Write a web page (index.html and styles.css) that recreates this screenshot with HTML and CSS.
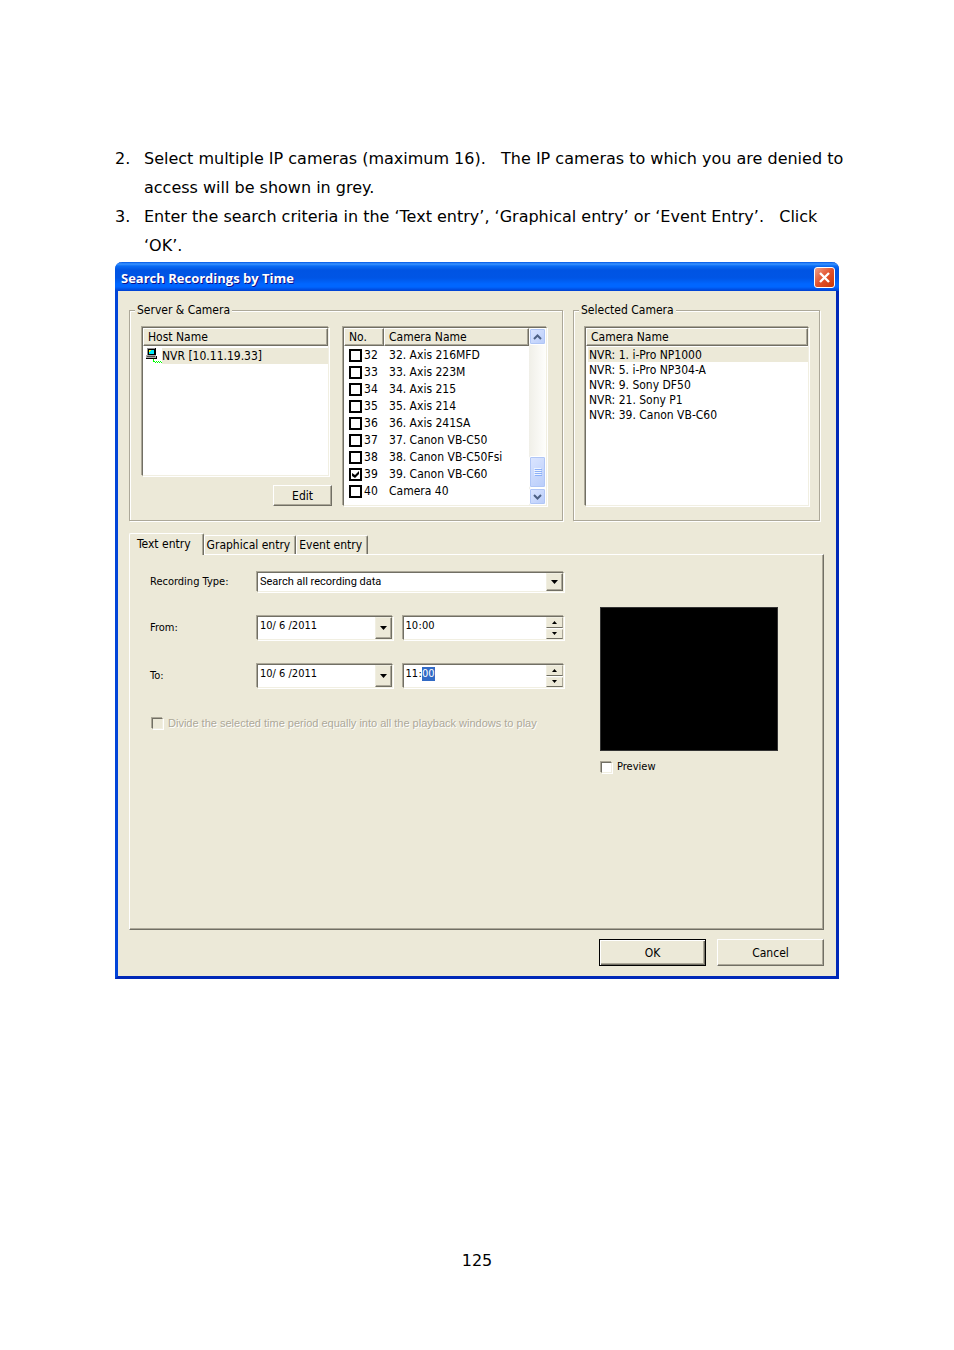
FILE: index.html
```html
<!DOCTYPE html>
<html lang="en">
<head>
<meta charset="utf-8">
<title>Search Recordings by Time</title>
<link rel="stylesheet" href="styles.css">
</head>
<body>
<main class="page">
  <ol class="steps" start="2">
    <li><span class="num">2.</span><p>Select multiple IP cameras (maximum 16).&nbsp;&nbsp; The IP cameras to which you are denied to access will be shown in grey.</p></li>
    <li><span class="num">3.</span><p>Enter the search criteria in the ‘Text entry’, ‘Graphical entry’ or ‘Event Entry’.&nbsp;&nbsp; Click ‘OK’.</p></li>
  </ol>

  <section class="dialog" aria-labelledby="dialog-title">
    <header class="titlebar">
      <h1 id="dialog-title">Search Recordings by Time</h1>
      <button class="close" type="button" aria-label="Close">
        <svg viewBox="0 0 19 19" width="19" height="19"><path d="M5 5l9 9M14 5l-9 9" stroke="#fff" stroke-width="2.4"/></svg>
      </button>
    </header>
    <form class="body">
      <div class="groups">
        <fieldset class="group group-server">
          <legend>Server &amp; Camera</legend>
          <div class="group-row">
            <div class="hosts">
              <div class="list host-list">
                <div class="head"><span class="head-cell">Host Name</span></div>
                <div class="host">
                  <svg viewBox="0 0 16 16" width="16" height="16" shape-rendering="crispEdges">
                    <path d="M1 0h9v8H1z" fill="#000"/>
                    <path d="M1 0h8v1H2v6H1z" fill="#909090"/>
                    <path d="M3 2h5v4H3z" fill="#00e8f8"/>
                    <path d="M3 2h2v1H4v1H3z" fill="#ffff00"/>
                    <path d="M0 8h11v3H0z" fill="#000"/>
                    <path d="M0 7h10v3H0z" fill="#a8a8a8"/>
                    <path d="M1 8h8v1H1z" fill="#505050"/>
                    <path d="M7 11h1v3H7zM7 13h2v1H7zM9 14h1v1H9zM10 13h1v1h-1zM11 14h1v1h-1zM12 13h1v1h-1zM13 14h1v1h-1zM14 13h1v1h-1zM15 14h1v1h-1z" fill="#00ff00"/>
                  </svg>
                  <span class="host-name">NVR [10.11.19.33]</span>
                </div>
              </div>
              <button class="btn btn-edit" type="button">Edit</button>
            </div>
            <div class="list camera-list">
              <table class="cameras">
                <thead><tr><th class="head-cell col-no">No.</th><th class="head-cell">Camera Name</th></tr></thead>
                <tbody>
                  <tr><td><label><input type="checkbox">32</label></td><td>32. Axis 216MFD</td></tr>
                  <tr><td><label><input type="checkbox">33</label></td><td>33. Axis 223M</td></tr>
                  <tr><td><label><input type="checkbox">34</label></td><td>34. Axis 215</td></tr>
                  <tr><td><label><input type="checkbox">35</label></td><td>35. Axis 214</td></tr>
                  <tr><td><label><input type="checkbox">36</label></td><td>36. Axis 241SA</td></tr>
                  <tr><td><label><input type="checkbox">37</label></td><td>37. Canon VB-C50</td></tr>
                  <tr><td><label><input type="checkbox">38</label></td><td>38. Canon VB-C50Fsi</td></tr>
                  <tr><td><label><input type="checkbox" checked>39</label></td><td>39. Canon VB-C60</td></tr>
                  <tr><td><label><input type="checkbox">40</label></td><td>Camera 40</td></tr>
                </tbody>
              </table>
              <div class="scrollbar">
                <button class="scroll-btn" type="button" aria-label="Scroll up"><svg viewBox="0 0 9 6" width="9" height="6"><path d="M1 5l3.500-3.500L8 5" fill="none" stroke="#4d6185" stroke-width="2"/></svg></button>
                <div class="track"><div class="thumb"><svg viewBox="0 0 8 8" width="8" height="8" shape-rendering="crispEdges"><path d="M0 0h7v1H0zM0 2h7v1H0zM0 4h7v1H0zM0 6h7v1H0z" fill="#eef4fe"/><path d="M1 1h7v1H1zM1 3h7v1H1zM1 5h7v1H1zM1 7h7v1H1z" fill="#8cb0f8"/></svg></div></div>
                <button class="scroll-btn" type="button" aria-label="Scroll down"><svg viewBox="0 0 9 6" width="9" height="6"><path d="M1 1l3.500 3.500L8 1" fill="none" stroke="#4d6185" stroke-width="2"/></svg></button>
              </div>
            </div>
          </div>
        </fieldset>
        <fieldset class="group group-selected">
          <legend>Selected Camera</legend>
          <div class="group-row">
            <div class="list selected-list">
              <div class="head"><span class="head-cell">Camera Name</span></div>
              <ul>
                <li class="current">NVR: 1. i-Pro NP1000</li>
                <li>NVR: 5. i-Pro NP304-A</li>
                <li>NVR: 9. Sony DF50</li>
                <li>NVR: 21. Sony P1</li>
                <li>NVR: 39. Canon VB-C60</li>
              </ul>
            </div>
          </div>
        </fieldset>
      </div>

      <div class="tabs" role="tablist">
        <button class="tab tab-active" type="button" role="tab" aria-selected="true">Text entry</button>
        <button class="tab" type="button" role="tab">Graphical entry</button>
        <button class="tab" type="button" role="tab">Event entry</button>
      </div>
      <div class="panel" role="tabpanel">
        <div class="fields">
          <label for="type">Recording Type:</label>
          <div class="field combo">
            <select id="type"><option>Search all recording data</option></select>
            <span class="drop"><svg viewBox="0 0 7 4" width="7" height="4"><path d="M0 0h7L3.500 4z"/></svg></span>
          </div>
          <label for="from-date">From:</label>
          <div class="pair">
            <div class="field date"><input id="from-date" type="text" value="10/ 6 /2011"><button class="drop" type="button" aria-label="Open calendar"><svg viewBox="0 0 7 4" width="7" height="4"><path d="M0 0h7L3.500 4z"/></svg></button></div>
            <div class="field time">
              <input class="seg" type="text" value="10" aria-label="From hour">:<input class="seg" type="text" value="00" aria-label="From minute">
              <div class="spin"><button type="button" aria-label="Later"><svg viewBox="0 0 5 3" width="5" height="3"><path d="M0 3h5L2.500 0z"/></svg></button><button type="button" aria-label="Earlier"><svg viewBox="0 0 5 3" width="5" height="3"><path d="M0 0h5L2.500 3z"/></svg></button></div>
            </div>
          </div>
          <label for="to-date">To:</label>
          <div class="pair">
            <div class="field date"><input id="to-date" type="text" value="10/ 6 /2011"><button class="drop" type="button" aria-label="Open calendar"><svg viewBox="0 0 7 4" width="7" height="4"><path d="M0 0h7L3.500 4z"/></svg></button></div>
            <div class="field time">
              <input class="seg" type="text" value="11" aria-label="To hour">:<input class="seg seg-active" type="text" value="00" aria-label="To minute">
              <div class="spin"><button type="button" aria-label="Later"><svg viewBox="0 0 5 3" width="5" height="3"><path d="M0 3h5L2.500 0z"/></svg></button><button type="button" aria-label="Earlier"><svg viewBox="0 0 5 3" width="5" height="3"><path d="M0 0h5L2.500 3z"/></svg></button></div>
            </div>
          </div>
          <label class="check check-off"><input type="checkbox" disabled>Divide the selected time period equally into all the playback windows to play</label>
        </div>
        <div class="preview">
          <div class="screen"></div>
          <label class="check"><input type="checkbox">Preview</label>
        </div>
      </div>
      <div class="actions">
        <button class="btn btn-default" type="button">OK</button>
        <button class="btn" type="button">Cancel</button>
      </div>
    </form>
  </section>
  <footer class="page-number">125</footer>
</main>
</body>
</html>
```
FILE: styles.css
```css
* { box-sizing: border-box; }
body { margin: 0; background: #fff; color: #000; font-family: "DejaVu Sans", Verdana, sans-serif; }
.page { padding: 144px 115px 80px; }

.steps { margin: 0 -10px 2px 0; padding: 0; list-style: none; font-size: 16px; line-height: 29px; }
.steps li { display: flex; }
.steps p { margin: 0; }
.num { flex: 0 0 29px; }

.dialog {
  --face: #ece9d8; --shade: #aca899; --dark: #716f64; --light: #f1efe2;
  border: 3px solid; border-top: 0; border-color: #0144d8 #0028b8 #0028b8 #0144d8;
  border-radius: 7px 7px 0 0; background: var(--face);
  font-family: "DejaVu Sans Condensed", Tahoma, sans-serif; font-size: 12px; line-height: 16px;
}
.dialog button, .dialog input, .dialog select { margin: 0; padding: 0; border: 0; font: inherit; color: inherit; background: none; border-radius: 0; }
.titlebar {
  display: flex; align-items: center; justify-content: space-between; height: 29px; margin: 0 -3px; padding: 2px 4px 0 6px;
  border-radius: 7px 7px 0 0;
  background: linear-gradient(#0058e6 0, #3a93ff 2px, #0a6cf5 4px, #0054e3 8px, #0055e5 16px, #0066ff 22px, #0066ff 25px, #0040d0 29px);
}
.titlebar h1 { margin: 0; color: #fff; font: 700 13px/20px "Open Sans", sans-serif; text-shadow: 1px 1px #0f1089; }
.dialog .close { display: grid; place-items: center; width: 21px; height: 21px; border: 1px solid #fff; border-radius: 3px; background: linear-gradient(135deg, #f0a088, #e2512c 50%, #c83808); }

.body { padding: 11px 12px 10px 11px; }
.groups { display: grid; grid-template-columns: 434fr 247fr; gap: 10px; margin-right: 4px; }
.group { min-width: 0; height: 219px; margin: 0; border: 1px solid var(--shade); box-shadow: 1px 1px #fff, inset 1px 1px #fff; }
.group-server { padding: 0 15px 0 12px; }
.group-selected { padding: 0 10px 0 11px; }
.group legend { margin-left: -7px; padding: 0 2px; background: var(--face); }
.group-selected legend { margin-left: -6px; }
.group-row { display: flex; gap: 11px; height: 179px; margin-top: 9px; }
.hosts { flex: 191 1 0; display: flex; flex-direction: column; gap: 9px; }

.list, .field {
  background: #fff; border: 1px solid; border-color: var(--dark) var(--light) var(--light) var(--dark);
  box-shadow: -1px -1px var(--shade), 1px 1px #fff;
}
.list { min-width: 0; }
.host-list { flex: 1; margin-right: 3px; }
.camera-list { flex: 203 1 0; display: flex; }
.selected-list { flex: 1; }
.head { display: flex; }
.head-cell {
  flex: 1; height: 18px; padding: 1px 4px 0; text-align: left; font-weight: 400; line-height: 15px; background: var(--face);
  border: 1px solid; border-color: #fff var(--dark) var(--dark) #fff; box-shadow: inset -1px -1px var(--shade);
}
.host { display: flex; margin-top: 2px; }
.host svg { margin-left: 3px; }
.host-name { flex: 1; background: var(--face); }

.cameras { flex: 1; align-self: flex-start; border-collapse: separate; border-spacing: 0; white-space: nowrap; }
.col-no { width: 40px; }
.cameras tbody::before { content: ""; display: block; height: 1px; }
.cameras td { height: 17px; padding: 0 0 0 5px; line-height: 17px; }
.cameras label { display: flex; align-items: center; gap: 2px; }
.dialog .cameras input { appearance: none; display: grid; place-items: center; width: 13px; height: 13px; border: 2px solid #000; background: #fff; }
.dialog .cameras input:checked::before { content: ""; width: 7px; height: 7px; background: #000; clip-path: polygon(0 29%, 43% 57%, 100% 0, 100% 43%, 43% 100%, 0 71%); }

.scrollbar { display: flex; flex-direction: column; width: 17px; background: linear-gradient(90deg, #f0efe8, #fefefc); }
.dialog .scroll-btn, .thumb { display: grid; place-items: center; border: 1px solid #fff; border-radius: 2px; background: linear-gradient(135deg, #dce6ff, #b8ccfa); box-shadow: inset 0 0 0 1px #b0c6f6; }
.dialog .scroll-btn { height: 17px; }
.track { flex: 1; display: flex; flex-direction: column; justify-content: flex-end; }
.thumb { height: 32px; }

.selected-list ul { margin: 1px 0 0; padding: 0 0 0 2px; list-style: none; }
.selected-list li { height: 15px; padding-left: 1px; line-height: 16px; white-space: nowrap; }
.selected-list .current { background: var(--face); }

.dialog .btn { border: 1px solid; border-color: #fff var(--dark) var(--dark) #fff; box-shadow: inset -1px -1px var(--shade); background: var(--face); }
.dialog .btn-edit { align-self: flex-end; width: 59px; height: 21px; }

.tabs { display: flex; align-items: flex-end; height: 22px; margin: 11px 0 0; }
.dialog .tab { height: 19px; padding: 0 5px 0 2px; border: 1px solid; border-color: #fff var(--dark) transparent #fff; border-bottom: 0; border-radius: 2px 2px 0 0; box-shadow: inset -1px 0 var(--shade); white-space: nowrap; }
.dialog .tab-active { position: relative; height: 22px; margin-bottom: -1px; padding: 0 12px 2px 7px; background: var(--face); }
.panel {
  display: flex; gap: 36px; height: 376px; padding: 17px 45px 0 20px;
  border: 1px solid; border-color: #fff var(--dark) var(--dark) #fff; box-shadow: inset -1px -1px var(--shade);
  font-size: 11px;
}
.fields { flex: 414 1 0; display: grid; grid-template-columns: 107px 1fr; gap: 24px 0; align-content: start; align-items: center; }
.pair { display: grid; grid-template-columns: 136fr 162fr; gap: 10px; }
.field { display: flex; height: 24px; line-height: 14px; min-width: 0; }
.combo { position: relative; height: 20px; }
.dialog .combo select { appearance: none; width: 100%; padding-left: 2px; font-family: Roboto, sans-serif; }
.combo .drop { position: absolute; top: 0; right: 0; bottom: 0; pointer-events: none; }
.dialog .drop { display: grid; place-items: center; width: 17px; border: 1px solid; border-color: var(--light) var(--dark) var(--dark) var(--light); box-shadow: inset -1px -1px var(--shade); background: var(--face); }
.dialog .date input { flex: 1; min-width: 0; height: 17px; padding-left: 2px; }
.time { padding: 2px 0 0 2px; }
.dialog .seg { width: 13px; height: 14px; }
.dialog .seg-active { background: #316ac5; color: #fff; }
.spin { display: flex; flex-direction: column; gap: 1px; width: 17px; margin: -2px 0 0 auto; }
.dialog .spin button { flex: 1; display: grid; place-items: center; border: 1px solid; border-color: var(--light) var(--shade) var(--dark) var(--light); background: var(--face); }
.check { display: flex; align-items: center; gap: 4px; }
.dialog .check input { appearance: none; flex: none; width: 11px; height: 11px; margin: 1px; border: 1px solid; border-color: var(--dark) var(--light) var(--light) var(--dark); background: #fff; box-shadow: -1px -1px var(--shade), 1px 1px #fff; }
.check-off { grid-column: 1 / -1; margin: 3px 0 0 1px; color: var(--shade); text-shadow: 1px 1px #fff; white-space: nowrap; font-family: "Liberation Sans", Arial, sans-serif; }
.dialog .check-off input { background: var(--face); }
.preview { flex: 178 1 0; margin-top: 35px; }
.screen { height: 144px; margin-bottom: 8px; background: #000; border: 1px solid #333; }

.actions { display: flex; justify-content: flex-end; gap: 11px; margin-top: 9px; }
.actions .btn { width: 107px; height: 27px; }
.dialog .btn-default { border-color: #000; box-shadow: inset 1px 1px #fff, inset -1px -1px var(--dark), inset -2px -2px var(--shade); }

.page-number { margin-top: 272px; text-align: center; font-size: 16px; line-height: 20px; }
```
